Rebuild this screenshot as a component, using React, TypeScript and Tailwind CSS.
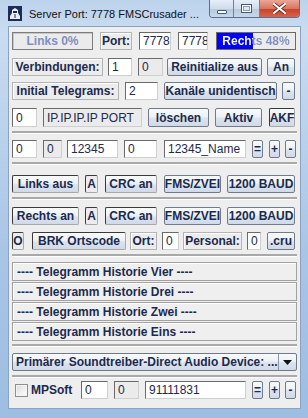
import type { ReactNode } from "react";

const FONT = "font-['Liberation_Sans',Arial,sans-serif]";

function Btn({
  children,
  className = "",
  pressed = false,
}: {
  children: ReactNode;
  className?: string;
  pressed?: boolean;
}) {
  return (
    <div
      className={`flex h-full shrink-0 items-center justify-center rounded-[2px] border whitespace-nowrap text-[12px] font-bold text-[#1c2a4e] ${
        pressed
          ? "border-t-[#3a3a3a] border-l-[#3a3a3a] border-r-[#a8a8a8] border-b-[#a8a8a8]"
          : "border-[#6f7a8a]"
      } bg-[linear-gradient(to_bottom,#f8fafc_0%,#edf1f6_45%,#dbe3ed_55%,#d0dae7_100%)] ${className}`}
    >
      {children}
    </div>
  );
}

function Field({
  value,
  className = "",
  disabled = false,
}: {
  value: string;
  className?: string;
  disabled?: boolean;
}) {
  return (
    <div
      className={`flex h-full shrink-0 items-center overflow-hidden whitespace-nowrap border border-t-[#6a6a6a] border-l-[#6a6a6a] border-r-[#cfcfcf] border-b-[#cfcfcf] pl-[3px] text-[12px] text-[#1c2a4e] ${
        disabled ? "bg-[#ebebeb]" : "bg-white"
      } ${className}`}
    >
      {value}
    </div>
  );
}

function LabelBox({ children, className = "" }: { children: ReactNode; className?: string }) {
  return (
    <div
      className={`flex h-full shrink-0 items-center justify-center whitespace-nowrap border border-[#b4b4b4] bg-[#ececec] shadow-[inset_1px_1px_0_#ffffff] text-[12px] font-bold text-[#1c2a4e] ${className}`}
    >
      {children}
    </div>
  );
}

function Sep({ className = "" }: { className?: string }) {
  return <div className={`h-[3px] border-t-[2px] border-[#a9a9a9] border-b border-b-white ${className}`} />;
}

function Small({ children, className = "" }: { children: ReactNode; className?: string }) {
  return (
    <Btn className={`w-[11px] text-[11px] ${className}`}>
      {children}
    </Btn>
  );
}

function History({ label }: { label: string }) {
  return (
    <div className="flex h-[19px] items-center border border-[#a2a2a2] bg-[#efefef] shadow-[inset_1px_1px_0_#ffffff] pl-[4px] text-[12px] font-bold text-[#1c2a4e]">
      ---- Telegramm Historie {label} ----
    </div>
  );
}

function TitleBar() {
  return (
    <div className="flex h-[26px] items-start">
      <div className="ml-[8px] mt-[6px] flex h-[15px] w-[14px] items-center justify-center bg-[#1d2a5c]">
        <svg width="12" height="13" viewBox="0 0 12 13">
          <path d="M6 1 L9 3 L9 6 L11 9 L11 12 L1 12 L1 9 L3 6 L3 3 Z" fill="#e9eef7" />
          <path d="M4 4 L8 4 L8 6 L4 6 Z" fill="#1d2a5c" />
          <path d="M5.5 7 L6.5 7 L6.5 11 L5.5 11 Z" fill="#1d2a5c" />
        </svg>
      </div>
      <div className="ml-[7px] mt-[7px] text-[11px] leading-[15px] text-[#111] whitespace-nowrap">
        Server Port: 7778 FMSCrusader ...
      </div>
      <div className="ml-auto mr-[8px] flex h-[18px] overflow-hidden rounded-b-[4px] border border-t-0 border-[#5a6f8e]">
        <div className="flex w-[24px] items-center justify-center border-r border-[#6c819f] bg-[linear-gradient(to_bottom,#e6eef8_0%,#cfdcec_50%,#b7c9df_51%,#c8d8ea_100%)]">
          <div className="mt-[6px] h-[4px] w-[10px] rounded-[1px] border border-[#445977] bg-white" />
        </div>
        <div className="flex w-[26px] items-center justify-center border-r border-[#6c819f] bg-[linear-gradient(to_bottom,#e6eef8_0%,#cfdcec_50%,#b7c9df_51%,#c8d8ea_100%)]">
          <div className="h-[9px] w-[11px] border border-[#445977] bg-white p-[1px]">
            <div className="h-full w-full border border-[#8aa0bd] bg-[#dfe8f3]" />
          </div>
        </div>
        <div className="flex w-[39px] items-center justify-center bg-[linear-gradient(to_bottom,#eaa799_0%,#d97460_50%,#c6422b_51%,#d8624a_100%)]">
          <svg width="13" height="11" viewBox="0 0 13 11">
            <path d="M1 1 L12 10 M12 1 L1 10" stroke="#5a1a12" strokeWidth="3.6" strokeLinecap="round" />
            <path d="M1 1 L12 10 M12 1 L1 10" stroke="#ffffff" strokeWidth="2.2" strokeLinecap="round" />
          </svg>
        </div>
      </div>
    </div>
  );
}

export default function App() {
  return (
    <div
      className={`flex h-[418px] w-[308px] flex-col overflow-hidden bg-[linear-gradient(to_bottom,#bdd3ec_0%,#c9dcf1_8%,#a9c5e6_60%,#9dbde2_100%)] ${FONT}`}
    >
      <TitleBar />
      <div className="flex flex-1 px-[8px] pb-[9px]">
        <div className="flex flex-1 flex-col border border-[#8aa3c3] bg-[#eeeeee] px-[3px] pt-[5px]">
          {/* row 1 */}
          <div className="flex h-[18px]">
            <div className="flex h-full w-[81px] items-center justify-center border border-[#7d7d7d] bg-[#ebebeb] shadow-[inset_1px_1px_0_#c7c7c7] text-[12px] font-bold text-[#7e8fc2]">
              Links 0%
            </div>
            <LabelBox className="ml-[7px] w-[32px]">Port:</LabelBox>
            <Field value="7778" className="ml-[7px] w-[32px]" />
            <Field value="7778" className="ml-[7px] w-[30px]" />
            <div className="ml-[8px] h-full w-[80px] border border-[#6a6a6a] bg-[linear-gradient(to_right,#0000ff_0px,#0000ff_36px,#ebebeb_36px,#ebebeb_100%)] p-0">
              <div className="flex h-full w-full items-center justify-center bg-[linear-gradient(to_right,#ffffff_0px,#ffffff_36px,#7e8fc2_36px,#7e8fc2_100%)] bg-clip-text text-[12px] font-bold text-transparent">
                Rechts 48%
              </div>
            </div>
          </div>

          {/* row 2 */}
          <div className="mt-[8px] flex h-[18px]">
            <LabelBox className="w-[91px]">Verbindungen:</LabelBox>
            <Field value="1" className="ml-[5px] w-[24px]" />
            <Field value="0" disabled className="ml-[6px] w-[25px]" />
            <Btn className="ml-[4px] w-[95px]">Reinitialize aus</Btn>
            <Btn className="ml-[5px] w-[28px]">An</Btn>
          </div>

          {/* row 3 */}
          <div className="mt-[6px] flex h-[18px]">
            <LabelBox className="w-[107px]">Initial Telegrams:</LabelBox>
            <Field value="2" className="ml-[6px] w-[33px]" />
            <Btn className="ml-[6px] w-[113px]">Kanäle unidentisch</Btn>
            <Btn className="ml-[5px] w-[13px]">-</Btn>
          </div>

          {/* row 4 */}
          <div className="mt-[8px] flex h-[19px]">
            <Field value="0" className="w-[25px]" />
            <Field value="IP.IP.IP.IP PORT" disabled className="ml-[6px] w-[99px]" />
            <Btn className="ml-[6px] w-[61px]">löschen</Btn>
            <Btn className="ml-[6px] w-[47px]">Aktiv</Btn>
            <Btn pressed className="ml-[7px] w-[26px]">AKF</Btn>
          </div>

          <Sep className="mt-[4px]" />

          {/* row 5 */}
          <div className="mt-[6px] flex h-[18px]">
            <Field value="0" className="w-[25px]" />
            <Field value="0" disabled className="ml-[6px] w-[19px]" />
            <Field value="12345" className="ml-[5px] w-[51px]" />
            <Field value="0" className="ml-[6px] w-[33px]" />
            <Field value="12345_Name" className="ml-[7px] w-[82px]" />
            <Small className="ml-[6px]">=</Small>
            <Small className="ml-[6px]">+</Small>
            <Small className="ml-[5px]">-</Small>
          </div>

          <Sep className="mt-[4px]" />

          {/* row 6 */}
          <div className="mt-[10px] flex h-[18px]">
            <Btn pressed className="w-[67px]">Links aus</Btn>
            <Btn pressed className="ml-[6px] w-[13px] bg-none bg-[#ececec]">A</Btn>
            <Btn pressed className="ml-[7px] w-[52px]">CRC an</Btn>
            <Btn className="ml-[7px] w-[57px]">FMS/ZVEI</Btn>
            <Btn className="ml-[6px] w-[68px]">1200 BAUD</Btn>
          </div>

          <Sep className="mt-[4px]" />

          {/* row 7 */}
          <div className="mt-[7px] flex h-[18px]">
            <Btn pressed className="w-[67px]">Rechts an</Btn>
            <Btn pressed className="ml-[6px] w-[13px] bg-none bg-[#ececec]">A</Btn>
            <Btn pressed className="ml-[7px] w-[52px]">CRC an</Btn>
            <Btn className="ml-[7px] w-[57px]">FMS/ZVEI</Btn>
            <Btn className="ml-[6px] w-[68px]">1200 BAUD</Btn>
          </div>

          {/* row 8 */}
          <div className="mt-[7px] flex h-[18px]">
            <Btn pressed className="w-[12px] bg-none bg-[#ececec]">O</Btn>
            <Btn pressed className="ml-[8px] w-[94px]">BRK Ortscode</Btn>
            <LabelBox className="ml-[4px] w-[27px]">Ort:</LabelBox>
            <Field value="0" className="ml-[5px] w-[17px]" />
            <LabelBox className="ml-[4px] w-[59px]">Personal:</LabelBox>
            <Field value="0" className="ml-[5px] w-[14px]" />
            <Btn className="ml-[6px] w-[28px]">.cru</Btn>
          </div>

          <Sep className="mt-[4px]" />

          <div className="mt-[5px] flex flex-col gap-[1px]">
            <History label="Vier" />
            <History label="Drei" />
            <History label="Zwei" />
            <History label="Eins" />
          </div>

          <Sep className="mt-[3px]" />

          {/* sound device combo */}
          <div className="mt-[6px] flex h-[18px] overflow-hidden rounded-[2px] border border-[#6f7a8a] bg-[linear-gradient(to_bottom,#f8fafc_0%,#edf1f6_45%,#dbe3ed_55%,#d0dae7_100%)]">
            <div className="flex flex-1 items-center pl-[3px] text-[12px] font-bold text-[#1c2a4e] whitespace-nowrap">
              Primärer Soundtreiber-Direct Audio Device: ...
            </div>
            <div className="flex w-[18px] items-center justify-center border-l border-[#8c97a6]">
              <svg width="9" height="5" viewBox="0 0 9 5">
                <path d="M0 0 L9 0 L4.5 5 Z" fill="#111" />
              </svg>
            </div>
          </div>

          <Sep className="mt-[4px]" />

          {/* last row */}
          <div className="mt-[3px] flex h-[18px] items-center">
            <div className="ml-[3px] h-[13px] w-[13px] border border-[#8e8f8f] bg-[linear-gradient(135deg,#dcdcdc,#ffffff)] shadow-[inset_0_0_0_1px_#f4f4f4]" />
            <div className="ml-[3px] w-[50px] text-[12px] font-bold text-[#1c2a4e]">MPSoft</div>
            <Field value="0" className="w-[27px]" />
            <Field value="0" disabled className="ml-[6px] w-[25px]" />
            <Field value="91111831" className="ml-[6px] w-[101px]" />
            <Small className="ml-[6px]">=</Small>
            <Small className="ml-[6px]">+</Small>
            <Small className="ml-[5px]">-</Small>
          </div>
        </div>
      </div>
    </div>
  );
}
